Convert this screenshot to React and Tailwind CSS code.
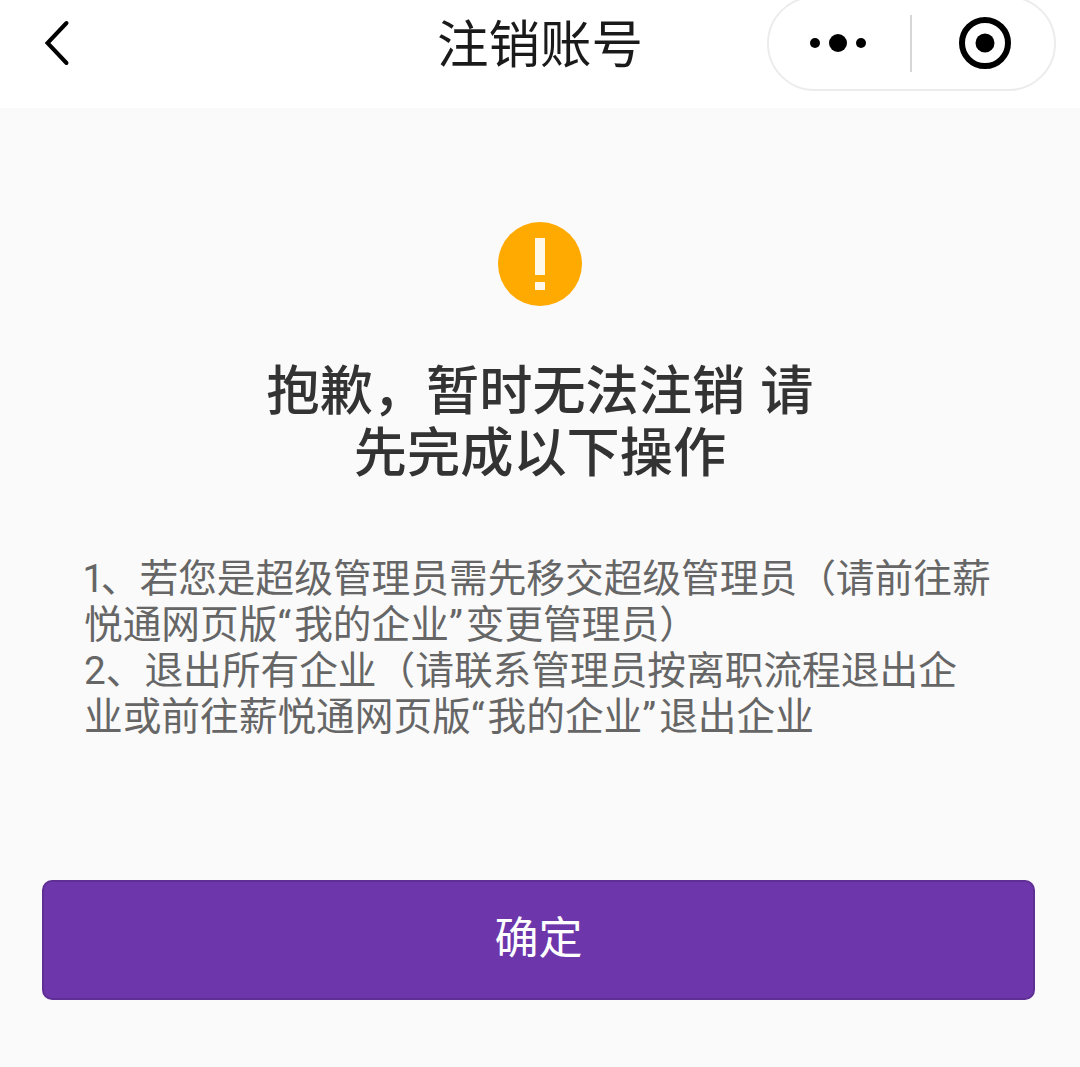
const Capsule = () => (
  <div className="absolute right-[24px] top-[-4px] w-[289px] h-[95px] rounded-[48px] border-2 border-[#ececec] bg-white">
    <svg width="289" height="95" viewBox="0 0 289 95" className="absolute left-[-2px] top-[-2px]">
      <circle cx="48" cy="47" r="5" fill="#000" />
      <circle cx="71" cy="47" r="9" fill="#000" />
      <circle cx="94" cy="47" r="5" fill="#000" />
      <rect x="143" y="19" width="2" height="57" fill="#d6d6d6" />
      <circle cx="218" cy="47" r="23" fill="none" stroke="#000" strokeWidth="6" />
      <circle cx="218" cy="47" r="9.5" fill="#000" />
    </svg>
  </div>
);

const Header = () => (
  <header className="relative h-[108px] flex-shrink-0 flex items-center justify-center bg-white overflow-hidden">
    <button className="absolute left-[40px] top-[16px] w-[36px] h-[54px]">
      <svg width="36" height="54" viewBox="0 0 36 54">
        <path d="M26.5 7 L7.5 27 L26.5 47" fill="none" stroke="#000" strokeWidth="4" strokeLinecap="round" strokeLinejoin="miter" />
      </svg>
    </button>
    <h1 className="text-[51.5px] leading-[58px] font-normal text-[#1a1a1a] mb-[16px]">注销账号</h1>
    <Capsule />
  </header>
);

const Q = ({ children }) => <span className="tracking-[3px]">{children}</span>;

const App = () => {
  return (
    <div className="w-[1080px] h-[1067px] flex flex-col bg-[#fafafa] overflow-hidden font-['Roboto','Noto_Sans_CJK_SC',sans-serif]">
      <Header />
      <main className="flex-1 flex flex-col items-center">
        <div className="mt-[114px] w-[84px] h-[84px] rounded-full bg-[#ffaa00] flex flex-col items-center blur-[0.6px]">
          <div className="mt-[16px] w-[10px] h-[37px] bg-[#fff8e8]" />
          <div className="mt-[7px] w-[10px] h-[8px] bg-[#fff8e8]" />
        </div>
        <h2 className="mt-[55px] w-[560px] text-center text-[53.2px] leading-[62px] font-medium text-[#333333] [word-spacing:2px]">
          抱歉，暂时无法注销 请先完成以下操作
        </h2>
        <div className="mt-[71px] w-[910px] self-start ml-[84px] text-[38.7px] leading-[46px] text-[#666666] proportional-nums">
          <p>1、若您是超级管理员需先移交超级管理员（请前往薪</p>
          <p>悦通网页版<Q>“</Q>我的企业<Q>”</Q>变更管理员）</p>
          <p>2、退出所有企业（请联系管理员按离职流程退出企</p>
          <p>业或前往薪悦通网页版<Q>“</Q>我的企业<Q>”</Q>退出企业</p>
        </div>
        <button className="mt-[140px] ml-[-3px] w-[993px] h-[120px] rounded-[10px] border-2 border-[#5f2f96] bg-[#6d37ab] text-white text-[44px] leading-[52px] pb-[2px]">
          确定
        </button>
      </main>
    </div>
  );
};

export default App;
